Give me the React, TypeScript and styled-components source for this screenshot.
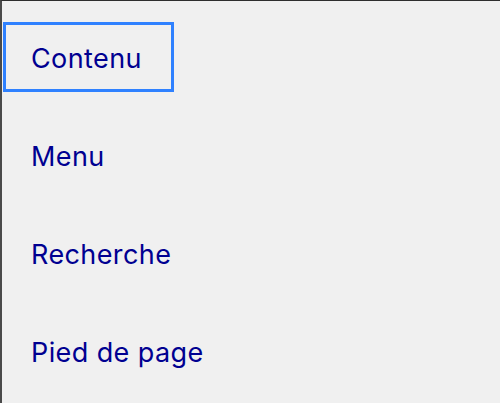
import { FunctionComponent } from 'react';
import styled, { createGlobalStyle } from 'styled-components';

const GlobalStyle = createGlobalStyle`
  html, body {
    margin: 0;
    padding: 0;
    background: #f0f0f0;
  }
`;

const Page = styled.nav`
  box-sizing: border-box;
  min-height: 403px;
  border-top: 1px solid #2e2e2e;
  border-left: 2px solid #4a4a4a;
  background: #f0f0f0;
  font-family: Inter, 'Noto Sans', sans-serif;
`;

const List = styled.ul`
  list-style: none;
  margin: 0;
  padding: 24px 0 0 4px;
  display: flex;
  flex-direction: column;
  gap: 34px;
`;

const Item = styled.li`
  display: flex;
`;

const SkipLink = styled.a<{ $focused?: boolean }>`
  display: inline-block;
  padding: 4px 29px 0 25px;
  line-height: 60px;
  font-size: 27px;
  letter-spacing: 0.4px;
  color: #000091;
  text-decoration: none;
  outline: ${(p) => (p.$focused ? '3px solid #2f81ff' : 'none')};
`;

const links = [
  { label: 'Contenu', href: '#contenu', focused: true },
  { label: 'Menu', href: '#menu' },
  { label: 'Recherche', href: '#recherche' },
  { label: 'Pied de page', href: '#footer' },
];

const App: FunctionComponent = () => {
  return (
    <>
      <GlobalStyle />
      <Page>
        <List>
          {links.map((link) => (
            <Item key={link.href}>
              <SkipLink href={link.href} $focused={link.focused}>
                {link.label}
              </SkipLink>
            </Item>
          ))}
        </List>
      </Page>
    </>
  );
};

export default App;
